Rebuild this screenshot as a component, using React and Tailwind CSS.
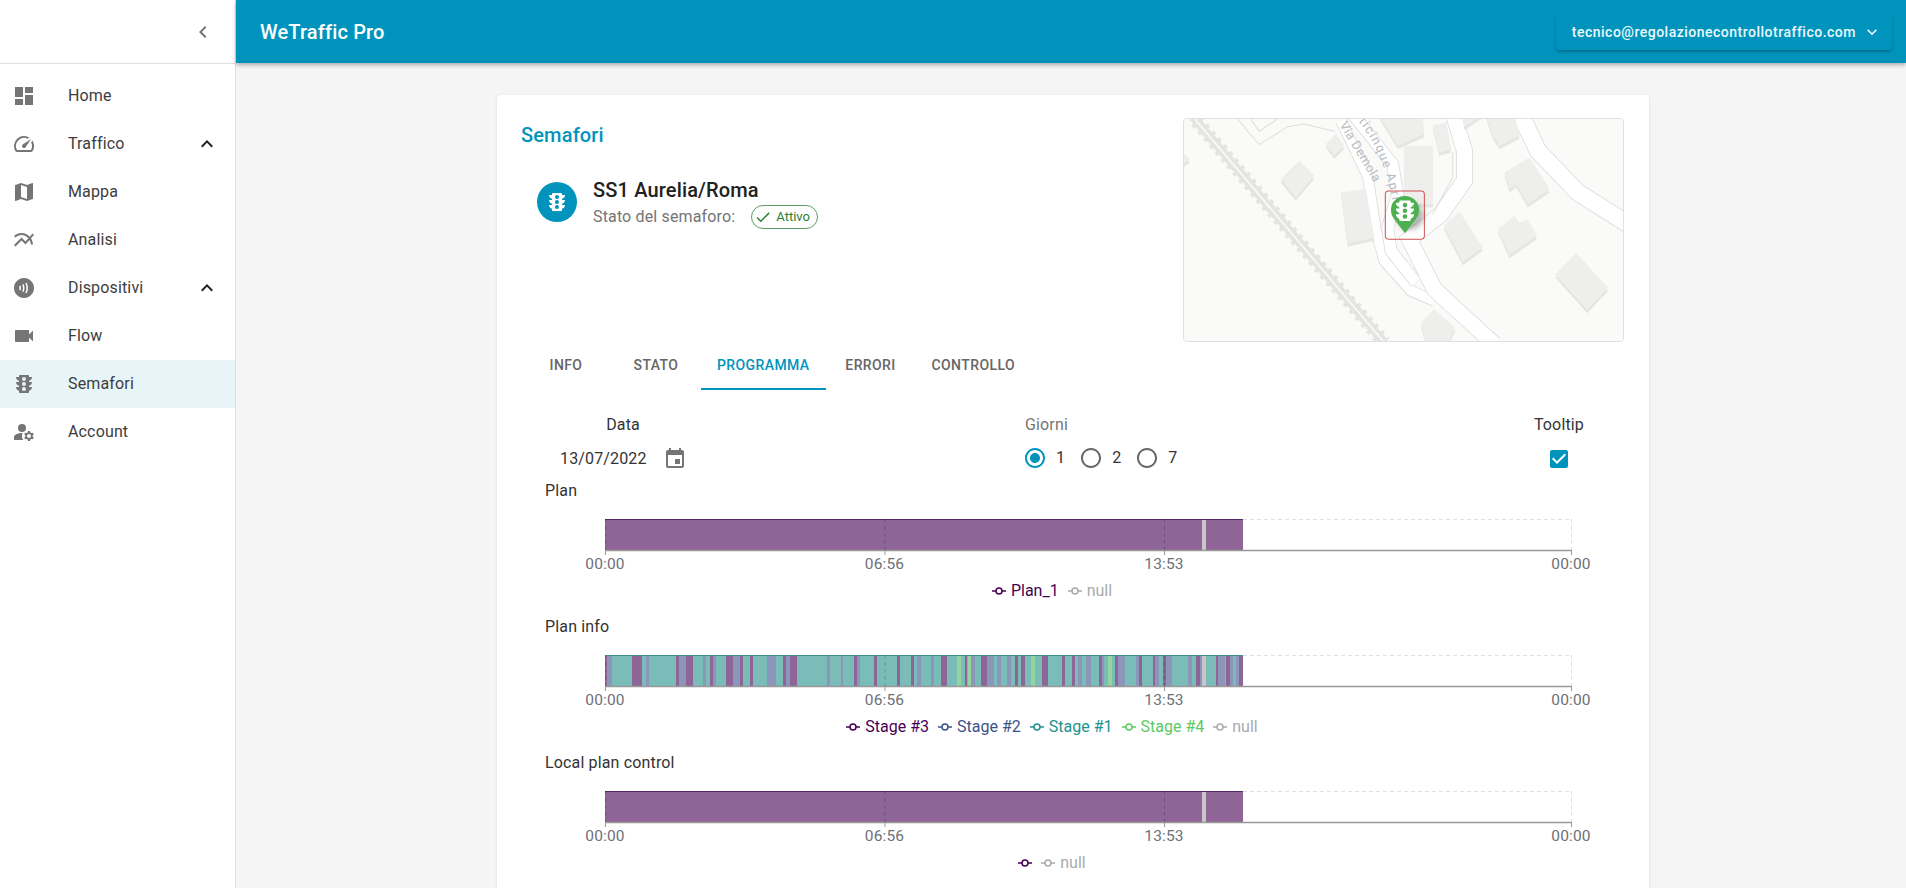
import React from 'react';
import {
  MdDashboard,
  MdOutlineSpeed,
  MdMap,
  MdMultilineChart,
  MdContactless,
  MdVideocam,
  MdTraffic,
  MdManageAccounts,
  MdExpandLess,
  MdExpandMore,
  MdChevronLeft,
  MdCheck,
  MdEvent,
  MdRadioButtonChecked,
  MdRadioButtonUnchecked,
  MdCheckBox
} from 'react-icons/md';

const navItems = [
  { label: 'Home', icon: MdDashboard },
  { label: 'Traffico', icon: MdOutlineSpeed, open: true },
  { label: 'Mappa', icon: MdMap },
  { label: 'Analisi', icon: MdMultilineChart },
  { label: 'Dispositivi', icon: MdContactless, open: true },
  { label: 'Flow', icon: MdVideocam },
  { label: 'Semafori', icon: MdTraffic, active: true },
  { label: 'Account', icon: MdManageAccounts }
];

const tabs = ['Info', 'Stato', 'Programma', 'Errori', 'Controllo'];

const PURPLE = '#8f6598';
const BLUE = '#8b96b8';
const TEAL = '#7abdb8';
const GREEN = '#93d59a';
const GREY = '#c9c6ca';

const planBars = [
  [0, 597, PURPLE],
  [597, 601, GREY],
  [601, 638, PURPLE]
];

const p = PURPLE;
const b = BLUE;
const g = GREEN;
const stageBars = [
  [0, 638, TEAL],
  [0, 2, p], [2, 7, b], [27, 37, p], [41, 44, b], [71, 74, p], [74, 81, b], [81, 88, p], [98, 101, b],
  [105, 108, p], [108, 111, b], [121, 128, p], [128, 135, b], [135, 138, p], [145, 148, p], [162, 171, b],
  [178, 181, p], [181, 185, b], [185, 192, p], [222, 225, b], [236, 238, b], [249, 252, p], [252, 255, b],
  [269, 272, p], [292, 295, p], [306, 309, p], [312, 316, b], [326, 329, b], [336, 342, p], [352, 356, g],
  [360, 362, p], [363, 366, g], [366, 370, b], [376, 382, p], [382, 389, b], [392, 396, b], [402, 406, b],
  [410, 413, p], [416, 420, p], [426, 430, g], [437, 443, p], [457, 460, p], [467, 470, p], [473, 477, b],
  [481, 486, b], [494, 497, p], [497, 499, b], [503, 507, g], [510, 513, p], [513, 520, b], [531, 534, b],
  [534, 537, p], [548, 550, p], [550, 554, b], [558, 561, p], [561, 567, b], [583, 587, b], [591, 595, p],
  [595, 597, b], [597, 601, GREY], [611, 613, p], [613, 620, b], [621, 625, p], [625, 628, b], [631, 634, b],
  [634, 638, p]
];

const charts = [
  {
    title: 'Plan',
    bars: planBars,
    line: '#5a2a68',
    legend: [
      { label: 'Plan_1', color: '#440154' },
      { label: 'null', color: '#aaaaaa' }
    ]
  },
  {
    title: 'Plan info',
    bars: stageBars,
    line: '#3f8f8c',
    legend: [
      { label: 'Stage #3', color: '#440154' },
      { label: 'Stage #2', color: '#3b528b' },
      { label: 'Stage #1', color: '#21918c' },
      { label: 'Stage #4', color: '#5ec962' },
      { label: 'null', color: '#aaaaaa' }
    ]
  },
  {
    title: 'Local plan control',
    bars: planBars,
    line: '#5a2a68',
    legend: [
      { label: '', color: '#440154' },
      { label: 'null', color: '#aaaaaa' }
    ]
  }
];

const ticks = [
  { x: 60, label: '00:00' },
  { x: 339.5, label: '06:56' },
  { x: 619, label: '13:53' },
  { x: 1026, label: '00:00' }
];

const Chart = ({ chart }) => (
  <div className="mb-3">
    <div className="h-6 leading-6 text-[#333]">{chart.title}</div>
    <svg width="1060" height="72" className="block">
      {chart.bars.map(([from, to, color], i) => (
        <rect key={i} x={60 + from} y="16" width={to - from} height="31" fill={color} />
      ))}
      <line x1="60" y1="16.5" x2="698" y2="16.5" stroke={chart.line} />
      <line x1="698" y1="16.5" x2="1026" y2="16.5" stroke="#e0e0e0" strokeDasharray="4 3" />
      {ticks.map((t) => (
        <line
          key={t.x}
          x1={t.x + 0.5}
          y1="16"
          x2={t.x + 0.5}
          y2="47"
          stroke={t.x > 700 ? '#e0e0e0' : '#00000030'}
          strokeDasharray="4 3"
        />
      ))}
      <line x1="60" y1="47.5" x2="1027" y2="47.5" stroke="#999999" strokeWidth="1.5" />
      {ticks.map((t) => (
        <g key={t.x}>
          <line x1={t.x + 0.5} y1="47" x2={t.x + 0.5} y2="52" stroke="#999999" />
          <text x={t.x} y="66" textAnchor="middle" fontSize="15.5" fill="#6e7079">
            {t.label}
          </text>
        </g>
      ))}
    </svg>
    <div className="mt-1 flex h-6 w-[1014px] items-center justify-center gap-[9px] tracking-normal">
      {chart.legend.map((item, i) => (
        <span key={i} className="flex items-center gap-[5px]" style={{ color: item.color }}>
          <svg width="14" height="10">
            <line x1="0" y1="5" x2="14" y2="5" stroke={item.color} strokeWidth="1.5" />
            <circle cx="7" cy="5" r="3" fill="#fff" stroke={item.color} strokeWidth="1.5" />
          </svg>
          {item.label}
        </span>
      ))}
    </div>
  </div>
);

const Road = ({ d, w }) => (
  <>
    <path d={d} fill="none" stroke="#d6d6d6" strokeWidth={w + 4} />
    <path d={d} fill="none" stroke="#ffffff" strokeWidth={w} />
  </>
);

const buildings = [
  '465,130 495,100 520,135 490,165',
  '330,235 385,180 430,225 375,290',
  '510,275 585,265 610,410 530,428',
  '700,135 785,135 785,310 700,310',
  '625,45 755,45 760,100 680,135',
  '785,75 825,65 840,145 805,155',
  '875,45 930,45 880,78',
  '945,45 1030,45 1045,105 985,135 965,105',
  '1000,215 1075,170 1135,265 1070,310 1035,250 1015,265',
  '818,375 865,332 935,440 875,483',
  '980,385 1030,345 1045,365 1070,355 1097,405 1015,462',
  '1152,520 1215,457 1310,560 1248,627',
  '750,665 790,625 852,680 830,730 765,730',
  '30,150 58,175 30,195'
];

const MapView = () => (
  <div className="h-[224px] w-[441px] shrink-0 overflow-hidden rounded border border-[#e0e0e0]">
    <svg width="441" height="224" viewBox="40 55 1321 671" className="block">
      <defs>
        <filter id="pinShadow" x="-50%" y="-50%" width="200%" height="200%">
          <feGaussianBlur stdDeviation="8" />
        </filter>
      </defs>
      <rect x="40" y="55" width="1321" height="671" fill="#fafaf8" />
      <path d="M200,55 L265,132 L350,78 L400,70 L490,92" fill="none" stroke="#dddddd" strokeWidth="3" />
      <path d="M240,55 L265,92 L320,55" fill="none" stroke="#dddddd" strokeWidth="3" />
      <path d="M68,50 L640,725" fill="none" stroke="#e4e4e2" strokeWidth="42" />
      <path d="M68,50 L640,725" fill="none" stroke="#fafaf8" strokeWidth="5" />
      <path d="M54,62 L626,737" fill="none" stroke="#fafaf8" strokeWidth="10" strokeDasharray="15 12" />
      <path d="M82,38 L654,713" fill="none" stroke="#fafaf8" strokeWidth="10" strokeDasharray="15 12" />
      <Road d="M510,60 L590,225 L615,390 L640,480 L720,570 L790,600" w={30} />
      <Road d="M545,40 L665,190 L680,280 L650,380 L660,450 L735,545" w={34} />
      <Road d="M850,50 L880,150 L880,240 L810,340 L715,415 L790,565 L970,730" w={46} />
      <path d="M785,340 L845,230 L845,155" fill="none" stroke="#dddddd" strokeWidth="3" />
      <Road d="M1050,45 L1100,150 L1220,275 L1370,370" w={50} />
      {buildings.map((pts) => (
        <g key={pts}>
          <polygon points={pts} fill="#e5e5e3" transform="translate(0 10)" />
          <polygon points={pts} fill="#eeeeec" />
        </g>
      ))}
      <path id="viaDemola" d="M505,72 L615,255" fill="none" />
      <path id="viaAprile" d="M562,62 Q650,170 672,350" fill="none" />
      <text fontSize="38" letterSpacing="1" fill="#b6bbc2">
        <textPath href="#viaDemola">Via Demola</textPath>
      </text>
      <text fontSize="38" letterSpacing="4" fill="#b6bbc2">
        <textPath href="#viaAprile">ticinque Aprile</textPath>
      </text>
      <rect x="643" y="271" width="117" height="144" rx="10" fill="none" stroke="#cf4f50" strokeWidth="3" />
      <circle cx="716" cy="345" r="42" fill="#00000045" filter="url(#pinShadow)" />
      <path d="M702,397 L668,352 A42,42 0 1 1 736,352 Z" fill="#4caf50" />
      <MdTraffic x="661" y="289" size={82} color="#ffffff" />
    </svg>
  </div>
);

export default function App() {
  return (
    <div className="flex h-screen overflow-hidden bg-[#f5f5f5] font-['Roboto',sans-serif] tracking-[0.15px]">
      <aside className="w-[236px] shrink-0 border-r border-[#e0e0e0] bg-white">
        <div className="flex h-[64px] items-center justify-end border-b border-[#e0e0e0] pr-5">
          <MdChevronLeft className="text-2xl text-[#757575]" />
        </div>
        <nav className="pt-2">
          {navItems.map((item) => {
            const Icon = item.icon;
            return (
              <div
                key={item.label}
                className={`flex h-12 items-center pl-3 pr-4 text-[#3d3d3d] ${item.active ? 'bg-[#e8f5f8]' : ''}`}
              >
                <span className="w-14 shrink-0">
                  <Icon className="text-2xl text-[#757575]" />
                </span>
                <span className="flex-1">{item.label}</span>
                {item.open && <MdExpandLess className="text-2xl text-[#212121]" />}
              </div>
            );
          })}
        </nav>
      </aside>

      <div className="flex min-w-0 flex-1 flex-col">
        <header className="z-10 flex h-[63px] shrink-0 items-center justify-between bg-[#0094bd] pl-6 pr-[14px] shadow-[0_2px_4px_rgba(0,0,0,0.3)]">
          <h1 className="text-xl font-medium tracking-[0.15px] text-white">WeTraffic Pro</h1>
          <button className="flex h-9 items-center rounded pl-4 pr-[10px] text-sm font-medium tracking-[0.5px] text-[#eaf8fc] shadow-[0_2px_3px_rgba(0,0,0,0.25)]">
            tecnico@regolazionecontrollotraffico.com
            <MdExpandMore className="ml-[6px] text-xl" />
          </button>
        </header>

        <main className="min-h-0 flex-1">
          <div className="ml-[261px] mt-8 w-[1152px] rounded bg-white pb-12 pl-6 pr-[25px] pt-[23px] shadow-[0_1px_3px_rgba(0,0,0,0.12)]">
            <div className="flex justify-between">
              <div>
                <h2 className="mt-[3px] h-7 text-xl font-medium leading-7 text-[#0094bd]">Semafori</h2>
                <div className="ml-4 mt-[29px] flex items-start gap-4">
                  <div className="mt-1 flex h-10 w-10 items-center justify-center rounded-full bg-[#0094bd]">
                    <MdTraffic className="text-2xl text-white" />
                  </div>
                  <div>
                    <div className="h-6 text-xl font-medium leading-6 text-[#212121]">SS1 Aurelia/Roma</div>
                    <div className="mt-[3px] flex h-6 items-center gap-4 text-[#757575]">
                      Stato del semaforo:
                      <span className="flex h-6 items-center gap-1 rounded-full border border-[#5d9c60] pl-[2px] pr-[7px] text-[13px] tracking-normal text-[#2e7d32]">
                        <MdCheck className="text-lg" />
                        Attivo
                      </span>
                    </div>
                  </div>
                </div>
              </div>
              <MapView />
            </div>

            <div className="flex h-12">
              {tabs.map((tab) => (
                <div
                  key={tab}
                  className={`flex h-12 min-w-[90px] items-center justify-center border-b-2 px-4 text-sm font-medium uppercase tracking-[0.4px] ${
                    tab === 'Programma' ? 'border-[#0094bd] text-[#0094bd]' : 'border-transparent text-[#666]'
                  }`}
                >
                  {tab}
                </div>
              ))}
            </div>

            <div className="pl-6">
              <div className="ml-[13px] mt-[23px] flex text-[#333]">
                <div className="w-[130px]">
                  <div className="h-6 text-center leading-6">Data</div>
                  <div className="mt-[10px] flex h-6 items-center gap-[16px] pl-[2px]">
                    <span>13/07/2022</span>
                    <MdEvent className="text-2xl text-[#757575]" />
                  </div>
                </div>
                <div className="ml-[335px]">
                  <div className="ml-[2px] h-6 leading-6 text-[#757575]">Giorni</div>
                  <div className="mt-[9px] flex h-6 items-center gap-[14px]">
                    <span className="flex items-center gap-[9px]">
                      <MdRadioButtonChecked className="text-2xl text-[#0094bd]" />1
                    </span>
                    <span className="flex items-center gap-[9px]">
                      <MdRadioButtonUnchecked className="text-2xl text-[#666]" />2
                    </span>
                    <span className="flex items-center gap-[9px]">
                      <MdRadioButtonUnchecked className="text-2xl text-[#666]" />7
                    </span>
                  </div>
                </div>
                <div className="ml-auto mr-[40px] flex flex-col items-center">
                  <div className="h-6 leading-6">Tooltip</div>
                  <MdCheckBox className="mt-[10px] text-2xl text-[#0094bd]" />
                </div>
              </div>

              <div className="mt-2">
                {charts.map((chart) => (
                  <Chart key={chart.title} chart={chart} />
                ))}
              </div>
            </div>
          </div>
        </main>
      </div>
    </div>
  );
}
